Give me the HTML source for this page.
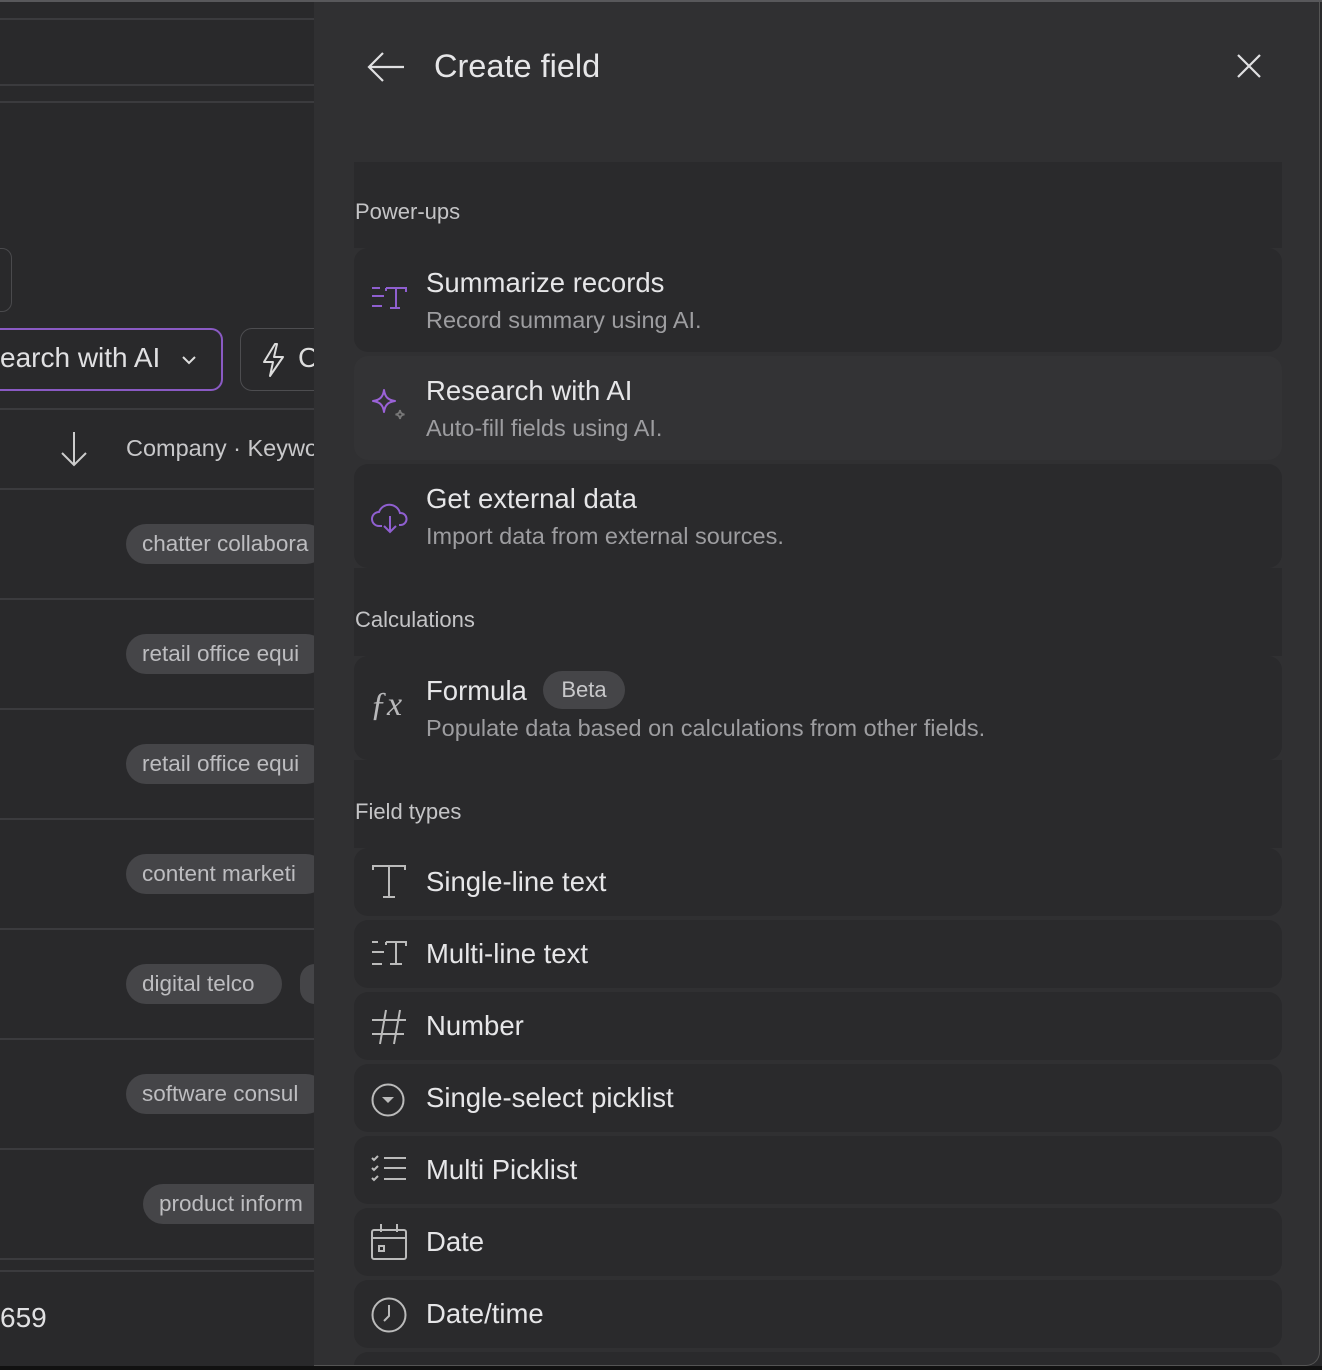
<!DOCTYPE html>
<html><head><meta charset="utf-8"><style>
*{margin:0;padding:0;box-sizing:border-box}
body{width:1322px;height:1370px;background:#29292b;font-family:"Liberation Sans",sans-serif;position:relative;overflow:hidden;color:#e4e4e6}
.a{position:absolute}
.ln{position:absolute;left:0;width:314px;height:2px;background:#3b3b3e}
.chip{position:absolute;height:40px;border-radius:20px;background:#454548;color:#bdbdc0;font-size:22.5px;line-height:40px;padding-left:16px;white-space:nowrap;overflow:hidden}
#panel{position:absolute;left:314px;top:2px;width:1006px;height:1364px;background:#303032;border-bottom-right-radius:14px;border-right:1px solid #555;border-bottom:1px solid #555;overflow:hidden}
.card{position:absolute;left:40px;width:928px;background:#2a2a2c;border-radius:14px}
.hd{position:absolute;left:40px;width:928px;background:#2a2a2c;font-size:22px;color:#c4c4c6;padding-left:1px}
.t{position:absolute;left:72px;font-size:27.5px;color:#e6e6e8;white-space:nowrap}
.s{position:absolute;left:72px;font-size:23.5px;color:#9d9da0;white-space:nowrap}
.ic{position:absolute;left:16px}
</style></head><body>
<div class="a" style="left:0;top:0;width:1322px;height:2px;background:#58585b"></div>
<div class="ln" style="top:18px"></div>
<div class="ln" style="top:84px"></div>
<div class="ln" style="top:101px"></div>
<div class="a" style="left:-20px;top:248px;width:32px;height:64px;border:1.5px solid #4a4a4d;border-radius:10px"></div>
<div class="a" style="left:-20px;top:328px;width:243px;height:63px;border:2px solid #8a5ac4;border-radius:12px"></div>
<div class="a" style="left:0;top:342px;font-size:28px;color:#e0e0e2;white-space:nowrap">earch with AI</div>
<svg class="a" style="left:180px;top:351px" width="18" height="18" viewBox="0 0 18 18"><path d="M3 6l6 6 6-6" fill="none" stroke="#ddd" stroke-width="2"/></svg>
<div class="a" style="left:240px;top:328px;width:100px;height:63px;border:1.5px solid #4d4d50;border-radius:12px"></div>
<svg class="a" style="left:259px;top:342px" width="30" height="36" viewBox="0 0 30 36"><path d="M16 2L5 20h9l-3 14 13-19h-9l3-13z" fill="none" stroke="#ddd" stroke-width="2" stroke-linejoin="round"/></svg>
<div class="a" style="left:298px;top:342px;font-size:28px;color:#ddd">C</div>
<div class="ln" style="top:408px"></div>
<svg class="a" style="left:57px;top:430px" width="34" height="38" viewBox="0 0 34 38"><path d="M17 2v33M5 23l12 12 12-12" fill="none" stroke="#ccc" stroke-width="2"/></svg>
<div class="a" style="left:126px;top:435px;font-size:23.5px;color:#c8c8ca;white-space:nowrap">Company · Keywo</div>
<div class="ln" style="top:488px"></div>
<div class="chip" style="left:126px;top:524px;width:200px">chatter collabora</div>
<div class="ln" style="top:598px"></div>
<div class="chip" style="left:126px;top:634px;width:200px">retail office equi</div>
<div class="ln" style="top:708px"></div>
<div class="chip" style="left:126px;top:744px;width:200px">retail office equi</div>
<div class="ln" style="top:818px"></div>
<div class="chip" style="left:126px;top:854px;width:200px">content marketi</div>
<div class="ln" style="top:928px"></div>
<div class="chip" style="left:126px;top:964px;width:156px">digital telco</div>
<div class="chip" style="left:300px;top:964px;width:30px"></div>
<div class="ln" style="top:1038px"></div>
<div class="chip" style="left:126px;top:1074px;width:200px">software consul</div>
<div class="ln" style="top:1148px"></div>
<div class="chip" style="left:143px;top:1184px;width:200px">product inform</div>
<div class="ln" style="top:1258px"></div>
<div class="ln" style="top:1270px"></div>
<div class="a" style="left:0;top:1302px;font-size:28px;color:#e0e0e2">659</div>

<div id="panel">
<svg class="a" style="left:52px;top:48px" width="40" height="34" viewBox="0 0 40 34"><path d="M38 17H4M17 3L3 17l14 14" fill="none" stroke="#e0e0e2" stroke-width="2.2"/></svg>
<div class="a" style="left:120px;top:46px;font-size:32.5px;color:#e6e6e8">Create field</div>
<svg class="a" style="left:922px;top:51px" width="26" height="26" viewBox="0 0 26 26"><path d="M2 2l22 22M24 2L2 24" stroke="#e0e0e2" stroke-width="2.2"/></svg>

<div class="hd" style="top:160px;height:86px;padding-top:37px">Power-ups</div>
<div class="card" style="top:246px;height:104px">
<svg class="ic" style="top:34px" width="38" height="34" viewBox="0 0 38 34"><g stroke="#8f5fd0" stroke-width="2" fill="none"><path d="M2 6h8M2 14h12M2 24h10"/><path d="M16 6h20v4"/><path d="M26 6v20M20 26h10"/><path d="M16 6v3"/></g></svg>
<div class="t" style="top:19px">Summarize records</div>
<div class="s" style="top:59px">Record summary using AI.</div></div>
<div class="card" style="top:354px;height:104px;background:#333335">
<svg class="ic" style="top:32px" width="40" height="40" viewBox="0 0 40 40"><path d="M14 2c1 7 4 10 11 11-7 1-10 4-11 11-1-7-4-10-11-11 7-1 10-4 11-11z" fill="none" stroke="#9b62d8" stroke-width="2" stroke-linejoin="round"/><path d="M30 22c.5 3 1.5 4 4.5 4.5-3 .5-4 1.5-4.5 4.5-.5-3-1.5-4-4.5-4.5 3-.5 4-1.5 4.5-4.5z" fill="none" stroke="#777" stroke-width="1.8"/></svg>
<div class="t" style="top:19px">Research with AI</div>
<div class="s" style="top:59px">Auto-fill fields using AI.</div></div>
<div class="card" style="top:462px;height:104px">
<svg class="ic" style="top:34px" width="40" height="40" viewBox="0 0 40 40"><path d="M12 28H9a7 7 0 0 1 0-14 11 11 0 0 1 21 1 6 6 0 0 1 1 12h-2" fill="none" stroke="#8f5fd0" stroke-width="2"/><path d="M20 18v16M14 28l6 6 6-6" fill="none" stroke="#8f5fd0" stroke-width="2"/></svg>
<div class="t" style="top:19px">Get external data</div>
<div class="s" style="top:59px">Import data from external sources.</div></div>

<div class="hd" style="top:566px;height:88px;padding-top:39px">Calculations</div>
<div class="card" style="top:654px;height:104px">
<div class="a" style="left:16px;top:30px;font-family:'Liberation Serif',serif;font-style:italic;font-size:34px;color:#b8b8ba">ƒx</div>
<div class="t" style="top:19px">Formula</div>
<div class="a" style="left:189px;top:15px;height:38px;width:82px;border-radius:19px;background:#454548;color:#c8c8ca;font-size:22px;line-height:38px;text-align:center">Beta</div>
<div class="s" style="top:59px">Populate data based on calculations from other fields.</div></div>

<div class="hd" style="top:758px;height:88px;padding-top:39px">Field types</div>
<div class="card" style="top:846px;height:68px">
<svg class="ic" style="top:16px" width="38" height="36" viewBox="0 0 38 36"><g stroke="#bbb" stroke-width="2" fill="none"><path d="M3 6V2h32v4M19 2v31M13 33h12"/></g></svg>
<div class="t" style="top:18px">Single-line text</div></div>
<div class="card" style="top:918px;height:68px">
<svg class="ic" style="top:18px" width="38" height="34" viewBox="0 0 38 34"><g stroke="#bbb" stroke-width="2" fill="none"><path d="M2 4h6M2 14h12M2 26h10M16 4h20v4M26 4v22M20 26h12M16 4v3"/></g></svg>
<div class="t" style="top:18px">Multi-line text</div></div>
<div class="card" style="top:990px;height:68px">
<svg class="ic" style="top:16px" width="38" height="38" viewBox="0 0 38 38"><g stroke="#bbb" stroke-width="2" fill="none"><path d="M16 2L10 36M30 2L24 36M2 12h34M2 26h32"/></g></svg>
<div class="t" style="top:18px">Number</div></div>
<div class="card" style="top:1062px;height:68px">
<svg class="ic" style="top:18px" width="36" height="36" viewBox="0 0 36 36"><circle cx="18" cy="18" r="15.5" fill="none" stroke="#bbb" stroke-width="2"/><path d="M12 15h12l-6 6z" fill="#bbb"/></svg>
<div class="t" style="top:18px">Single-select picklist</div></div>
<div class="card" style="top:1134px;height:68px">
<svg class="ic" style="top:18px" width="38" height="34" viewBox="0 0 38 34"><g stroke="#bbb" stroke-width="2" fill="none"><path d="M2 4l2 2 4-4M2 14l2 2 4-4M2 24l2 2 4-4M14 4h22M14 14h22M14 25h22"/></g></svg>
<div class="t" style="top:18px">Multi Picklist</div></div>
<div class="card" style="top:1206px;height:68px">
<svg class="ic" style="top:14px" width="38" height="40" viewBox="0 0 38 40"><g stroke="#bbb" stroke-width="2" fill="none"><rect x="2" y="8" width="34" height="29" rx="2"/><path d="M2 16h34M11 2v8M27 2v8"/><rect x="9" y="24" width="5" height="5"/></g></svg>
<div class="t" style="top:18px">Date</div></div>
<div class="card" style="top:1278px;height:68px">
<svg class="ic" style="top:16px" width="38" height="38" viewBox="0 0 38 38"><circle cx="19" cy="19" r="16.5" fill="none" stroke="#bbb" stroke-width="2"/><path d="M19 9v11l-5 5" fill="none" stroke="#bbb" stroke-width="2"/></svg>
<div class="t" style="top:18px">Date/time</div></div>
<div class="card" style="top:1350px;height:68px"></div>
</div>
<div class="a" style="left:0;top:1366px;width:1322px;height:4px;background:#111"></div>
</body></html>
